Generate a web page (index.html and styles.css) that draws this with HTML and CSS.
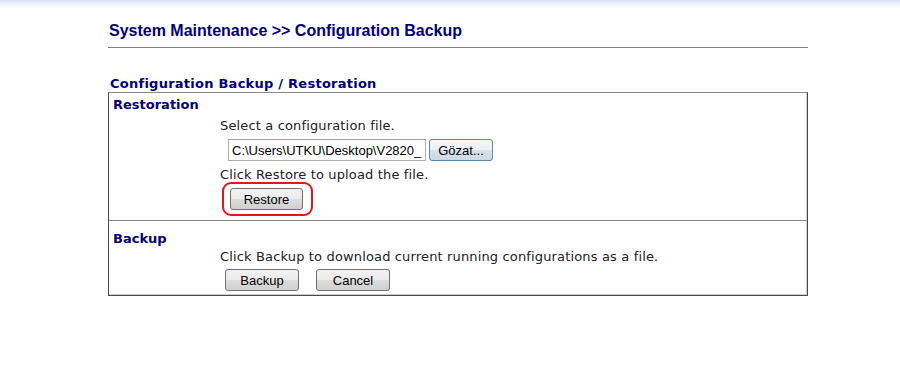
FILE: index.html
```html
<!doctype html>
<html lang="en">
<head>
<meta charset="utf-8">
<title>System Maintenance &gt;&gt; Configuration Backup</title>
<link rel="stylesheet" href="styles.css">
</head>
<body>

<div class="page">
  <h1 class="title">System Maintenance &gt;&gt; Configuration Backup</h1>

  <h2 class="caption">Configuration Backup / Restoration</h2>

  <div class="panel">
    <div class="section section-restore">
      <div class="section-head">Restoration</div>
      <div class="section-body">
        <p>Select a configuration file.</p>
        <div class="file-row">
          <input class="file-path" type="text" value="C:\Users\UTKU\Desktop\V2820_" readonly>
          <button class="btn btn-browse">Gözat...</button>
        </div>
        <p class="restore-note">Click Restore to upload the file.</p>
        <div class="mark">
          <button class="btn btn-restore">Restore</button>
        </div>
      </div>
    </div>
    <div class="section section-backup">
      <div class="section-head">Backup</div>
      <div class="section-body">
        <p>Click Backup to download current running configurations as a file.</p>
        <div class="btn-row">
          <button class="btn btn-backup">Backup</button>
          <button class="btn btn-cancel">Cancel</button>
        </div>
      </div>
    </div>
  </div>
</div>

</body>
</html>
```

FILE: styles.css
```css
html, body {
  margin: 0;
  padding: 0;
}
body {
  background: linear-gradient(#d4e3f4 0px, #eef4fb 4px, #ffffff 9px) no-repeat;
  background-size: 100% 12px;
  background-color: #fff;
  font-family: "DejaVu Sans", Verdana, sans-serif;
  font-size: 13px;
  color: #222;
}
.page {
  margin-left: 108px;
  width: 700px;
  padding-top: 21px;
}
.title {
  margin: 0;
  padding: 0 0 6px 1px;
  font-family: "Liberation Sans", Arial, sans-serif;
  font-size: 16px;
  line-height: 20px;
  font-weight: bold;
  color: #000080;
  border-bottom: 1px solid #808080;
}
.caption {
  margin: 28px 0 0 2px;
  font-size: 13px;
  line-height: 16px;
  font-weight: bold;
  letter-spacing: 0.25px;
  color: #000080;
}
.panel {
  border: 1px solid #4a4a4a;
  border-top-color: #8a8a8a;
}
.section {
  border-right: 1px solid #cfcfcf;
  padding-left: 4px;
}
.section-restore {
  padding-top: 4px;
  padding-bottom: 4px;
}
.section-backup {
  padding-top: 10px;
  padding-bottom: 3px;
  border-top: 1px solid #8a8a8a;
  border-bottom: 1px solid #cfcfcf;
}
.section-head {
  font-size: 13px;
  line-height: 16px;
  font-weight: bold;
  color: #000080;
}
.section-body {
  padding-left: 107px;
}
.section-body p {
  margin: 3px 0 0;
  line-height: 14px;
  letter-spacing: 0.15px;
}
.section-restore p {
  margin-top: 6px;
}
.section-restore .restore-note {
  margin-top: 7px;
}
.file-row {
  display: flex;
  align-items: center;
  gap: 3px;
  margin: 6px 0 0 8px;
}
.file-path {
  width: 198px;
  height: 22px;
  box-sizing: border-box;
  margin: 0;
  padding: 0 3px;
  border: 1px solid #abadb3;
  border-top-color: #a0a3aa;
  font-family: "Liberation Sans", Arial, sans-serif;
  font-size: 13px;
  color: #000;
  outline: none;
}
.btn {
  height: 22px;
  box-sizing: border-box;
  margin: 0;
  padding: 0 8px;
  border: 1px solid #707070;
  border-radius: 3px;
  background: linear-gradient(#f2f2f2 0%, #ebebeb 50%, #dddddd 51%, #cfcfcf 100%);
  font-family: "Liberation Sans", Arial, sans-serif;
  font-size: 13px;
  color: #000;
}
.btn-browse {
  width: 64px;
  border-color: #5c86b4;
  background: linear-gradient(#f4f8fc 0%, #e8eef5 50%, #d9e2ec 51%, #cdd8e4 100%);
}
.mark {
  width: fit-content;
  margin: 0 0 0 2px;
  padding: 4px 8px 4px 6px;
  border: 2px solid #e8141c;
  border-radius: 9px;
}
.btn-restore {
  display: block;
  width: 73px;
}
.btn-row {
  display: flex;
  gap: 17px;
  margin: 5px 0 0 5px;
}
.btn-backup,
.btn-cancel {
  width: 74px;
}
```
